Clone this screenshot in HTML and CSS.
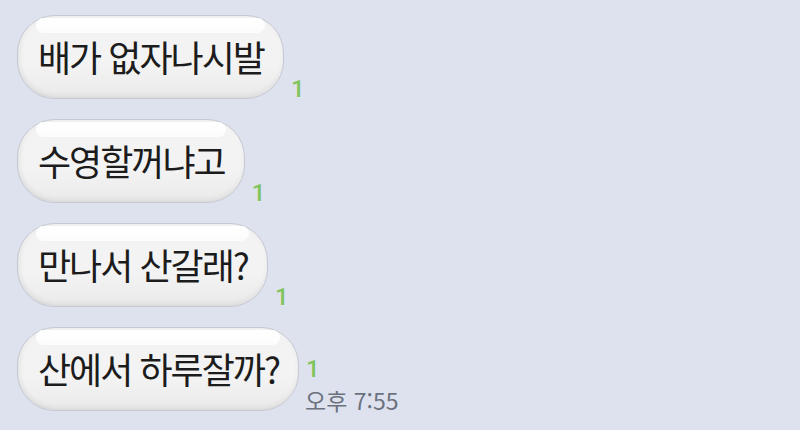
FILE: index.html
```html
<!DOCTYPE html>
<html lang="ko">
<head>
<meta charset="utf-8">
<link rel="stylesheet" href="styles.css">
</head>
<body>
<div class="chat">
  <div class="row">
    <div class="bubble">배가 없자나시발</div>
    <div class="meta"><span class="unread">1</span></div>
  </div>
  <div class="row">
    <div class="bubble">수영할꺼냐고</div>
    <div class="meta"><span class="unread">1</span></div>
  </div>
  <div class="row">
    <div class="bubble">만나서 산갈래?</div>
    <div class="meta"><span class="unread">1</span></div>
  </div>
  <div class="row">
    <div class="bubble">산에서 하루잘까?</div>
    <div class="meta"><span class="unread">1</span><span class="time">오후 7:55</span></div>
  </div>
</div>
</body>
</html>
```
FILE: styles.css
```css
html, body {
  margin: 0;
  padding: 0;
  background: #dde2ee;
  width: 800px;
  height: 430px;
  overflow: hidden;
}
.chat {
  display: flex;
  flex-direction: column;
  gap: 20px;
  padding: 15px 0 0 17px;
}
.row {
  display: flex;
  align-items: flex-end;
}
.bubble {
  position: relative;
  height: 84px;
  box-sizing: border-box;
  display: flex;
  align-items: center;
  padding: 0 19px 2px 20px;
  border: 1.5px solid #c4c8d0;
  border-radius: 38px;
  background: linear-gradient(#f3f3f3 0%, #f3f3f3 60%, #eaeaea 100%);
  box-shadow: inset 0 -3px 5px rgba(0,0,0,0.05), inset 3px 0 5px rgba(0,0,0,0.03);
  font-family: "Noto Sans CJK KR", "Noto Sans", sans-serif;
  font-size: 36px;
  letter-spacing: -2px;
  color: #1c1c1c;
  white-space: nowrap;
}
.bubble::before {
  content: "";
  position: absolute;
  top: 2px;
  left: 18px;
  right: 18px;
  height: 15px;
  border-radius: 10px;
  background: linear-gradient(#ffffff, #fcfcfc);
}
.meta {
  display: flex;
  flex-direction: column;
  align-items: flex-start;
  margin-left: 7px;
  padding-bottom: 0;
}
.unread {
  font-family: "Roboto", "Noto Sans", sans-serif;
  font-weight: 500;
  font-size: 24px;
  line-height: 20px;
  color: #80c45c;
}
.time {
  font-family: "Noto Sans CJK KR", "Noto Sans", sans-serif;
  font-size: 23px;
  line-height: 22px;
  color: #6b717d;
  margin-top: 10px;
  margin-left: -1px;
}
```
